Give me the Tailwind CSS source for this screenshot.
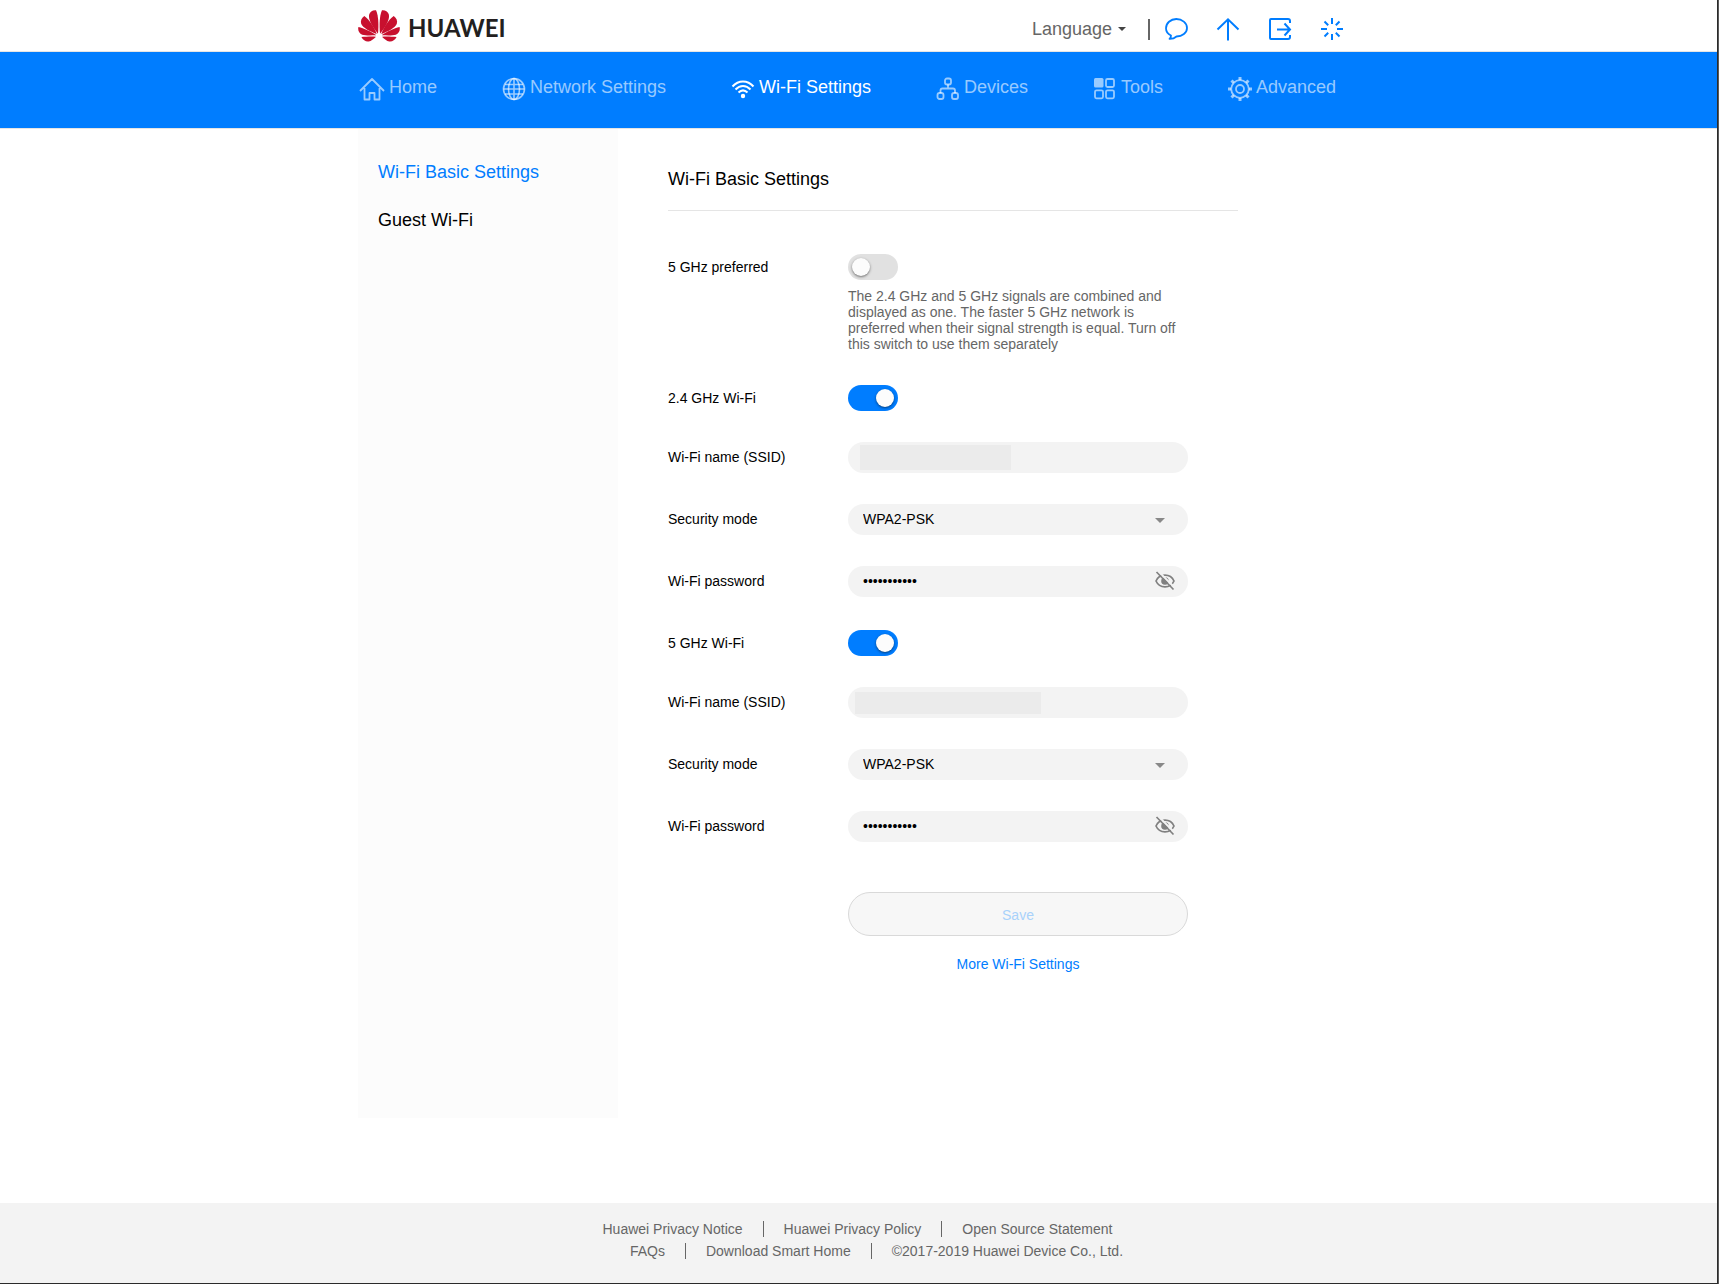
<!DOCTYPE html>
<html lang="en">
  <head>
    <meta charset="UTF-8" />
    <meta name="viewport" content="width=device-width, initial-scale=1.0" />
    <title>Wi-Fi Basic Settings</title>
    <script src="https://cdn.jsdelivr.net/npm/@tailwindcss/browser@4"></script>
  </head>
  <body class="bg-white text-black font-['Liberation_Sans',Arial,sans-serif] text-sm border-r border-[#5a5a5a]">
    <div class="min-h-screen flex flex-col border-r border-b border-[#2b2b2b]">
      <!-- Top bar -->
      <header class="border-b border-[#e5e5e5]">
        <div class="max-w-[1001px] h-[51px] mx-auto flex items-center justify-between">
          <a href="#" class="flex items-center" aria-label="Huawei">
            <svg class="w-[42px] h-8" viewBox="0 0 42 32" fill="#c8102e">
              <g id="petals">
                <path d="M20 23.300C20.700 16.500 20.700 6 18 .3C14.600 0 11.700 1.800 11.100 4.800C10.200 9.800 14.200 16.500 19.700 23.400z" />
                <path d="M18.700 23.900C16.300 17 11.200 9.600 6.300 6C3.400 8 2.300 11 3.200 13.800C4.700 18 11.800 21.300 18.500 24.100z" />
                <path d="M18.100 25.100C13.200 21.900 5.800 18.200 .4 17.100C-.4 20.400 1.100 23.500 4.200 24.700C7.600 25.800 13.600 25.400 18 25.300z" />
                <path d="M17.700 26.700C13 26.500 7.500 26.700 3.400 27.100C5.100 30.300 8 32 10.700 31.500C13.300 31 15.600 28.900 17.800 26.900z" />
              </g>
              <use href="#petals" transform="matrix(-1 0 0 1 42 0)" />
            </svg>
            <span class="ml-2 pt-1 font-['Lato',sans-serif] text-2xl leading-6 font-bold text-[#231f20]">HUAWEI</span>
          </a>
          <div class="flex items-center pt-[7px]">
            <button class="flex items-center gap-1.5 text-lg text-[#666]">
              Language
              <svg class="w-2 h-1" viewBox="0 0 8 4" fill="#444"><path d="M0 0h8L4 4z" /></svg>
            </button>
            <span class="w-0.5 h-[21px] ml-[22px] bg-[#666]"></span>
            <div class="flex gap-7 ml-3.5 mr-[15px] text-[#007dff]">
              <button aria-label="Feedback">
                <svg class="size-6" viewBox="0 0 24 24" fill="none" stroke="currentColor" stroke-width="1.800">
                  <path d="M7 18.500C3.800 17 2 14.300 2 11.300C2 6.300 6.500 2 12.300 2S23 6 23 10.900S18.300 19.500 12.500 19.500C10.500 21.300 8.300 22 5.500 21.900C6.700 21 7 19.800 7 18.500z" stroke-linejoin="round" />
                </svg>
              </button>
              <button aria-label="Update">
                <svg class="size-6" viewBox="0 0 24 24" fill="none" stroke="currentColor" stroke-width="2">
                  <path d="M12 23.500V2.500M1.500 12.500L12 2.300L22.500 12.500" />
                </svg>
              </button>
              <button aria-label="Log out">
                <svg class="size-6" viewBox="0 0 24 24" fill="none" stroke="currentColor" stroke-width="2">
                  <path d="M22 6V4Q22 2 20 2H3Q2 2 2 3V21Q2 22 3 22H20Q22 22 22 20V18M9 12.500H22M16.500 6.500L22 12.500L16.500 18.500" />
                </svg>
              </button>
              <button aria-label="Restart">
                <svg class="size-6" viewBox="0 0 24 24" fill="none" stroke="currentColor" stroke-width="2">
                  <path d="M12 1v6M12 17v6M1 12h6M17 12h6M4.500 4.500l3.700 3.700M15.800 15.800l3.700 3.700M4.500 19.500l3.700-3.700M15.800 8.200l3.700-3.700" />
                </svg>
              </button>
            </div>
          </div>
        </div>
      </header>

      <!-- Main navigation -->
      <nav class="bg-[#007dff] border-b border-[#e5e5e5]">
        <div class="max-w-[1001px] h-[76px] pb-1.5 mx-auto flex items-center justify-between pl-px pr-[23px] text-lg text-white/60">
          <a href="#" class="flex items-center gap-1">
            <svg class="w-[26px] h-6 mt-1" viewBox="0 0 26 24" fill="none" stroke="currentColor" stroke-width="1.800">
              <path d="M1 14L13 2L25 14M5.500 11V22.500H10.500V16H15.500V22.500H20.500V11" stroke-linejoin="round" />
            </svg>
            Home
          </a>
          <a href="#" class="flex items-center gap-1">
            <svg class="size-6 mt-1" viewBox="0 0 24 24" fill="none" stroke="currentColor" stroke-width="1.600">
              <circle cx="12" cy="12" r="10.500" />
              <ellipse cx="12" cy="12" rx="5.500" ry="10.500" />
              <path d="M12 1.500v21M3 7.500h18M1.500 12h21M3 17h18" />
            </svg>
            Network Settings
          </a>
          <a href="#" class="flex items-center gap-1 text-white">
            <svg class="size-6 mt-1" viewBox="0 0 24 24" fill="none" stroke="currentColor" stroke-width="2">
              <path d="M1.500 9.500C7.500 2.800 16.500 2.800 22.500 9.500M4.500 12.500C9 7.800 15 7.800 19.500 12.500M7.500 15.500C10.300 12.800 13.700 12.800 16.500 15.500" />
              <circle cx="12" cy="19" r="2.200" fill="currentColor" stroke="none" />
            </svg>
            Wi-Fi Settings
          </a>
          <a href="#" class="flex items-center gap-1">
            <svg class="size-6 mt-1" viewBox="0 0 24 24" fill="none" stroke="currentColor" stroke-width="1.800">
              <rect x="9" y="1.500" width="6" height="6" rx="2" />
              <rect x="1.500" y="16" width="6" height="6" rx="2" />
              <rect x="16" y="16" width="6" height="6" rx="2" />
              <path d="M12 7.500v4M4.500 16V13.500Q4.500 11.500 6.500 11.500H17Q19 11.500 19 13.500V16" />
            </svg>
            Devices
          </a>
          <a href="#" class="flex items-center gap-1">
            <svg class="size-6 mt-1" viewBox="0 0 24 24" fill="none" stroke="currentColor" stroke-width="1.800">
              <rect x="1" y="1" width="9.500" height="9.500" rx="1.500" fill="currentColor" stroke="none" />
              <rect x="13" y="2" width="8" height="8" rx="1.500" />
              <rect x="2" y="13.300" width="8" height="8" rx="1.500" />
              <rect x="13" y="13.300" width="8" height="8" rx="1.500" />
            </svg>
            Tools
          </a>
          <a href="#" class="flex items-center gap-1">
            <svg class="size-6 mt-1" viewBox="0 0 24 24" fill="none" stroke="currentColor" stroke-width="1.800">
              <circle cx="12" cy="12" r="8.800" />
              <circle cx="12" cy="12" r="4" />
              <path d="M12 0v3M12 21v3M0 12h3M21 12h3M3.500 3.500l2.200 2.200M18.300 18.300l2.200 2.200M3.500 20.500l2.200-2.200M18.300 5.700l2.200-2.200" stroke-width="3" />
            </svg>
            Advanced
          </a>
        </div>
      </nav>

      <div class="w-full max-w-[1001px] mx-auto flex grow mb-[85px]">
        <!-- Side menu -->
        <aside class="w-[260px] shrink-0 bg-[#fcfcfc] px-5 pt-[19px] text-lg">
          <a href="#" class="block h-12 leading-12 text-[#007dff]">Wi-Fi Basic Settings</a>
          <a href="#" class="block h-12 leading-12">Guest Wi-Fi</a>
        </aside>

        <main class="w-[570px] ml-[50px]">
          <h1 class="h-[82px] pt-9 text-lg border-b border-[#e5e5e5]">Wi-Fi Basic Settings</h1>
          <form class="pt-[43px]">
            <div class="flex h-[131px]">
              <label for="preferred" class="w-[180px] leading-[26px]">5 GHz preferred</label>
              <div class="w-[340px]">
                <input type="checkbox" id="preferred" class="block appearance-none w-[50px] h-[26px] rounded-full bg-[#e1e1e1] checked:bg-[#007dff] before:block before:size-[18px] before:m-1 before:rounded-full before:bg-[#fcfcfc] before:shadow before:shadow-black/40 checked:before:ml-7" />
                <p class="mt-2 leading-4 text-[#666]">
                  The 2.4 GHz and 5 GHz signals are combined and displayed as one. The faster 5 GHz network is preferred when their signal strength is equal. Turn off this switch to use them separately
                </p>
              </div>
            </div>

            <!-- 2.4 GHz -->
            <div class="flex h-[57px]">
              <label for="wifi24" class="w-[180px] leading-[26px]">2.4 GHz Wi-Fi</label>
              <input type="checkbox" id="wifi24" checked class="block appearance-none w-[50px] h-[26px] rounded-full bg-[#e1e1e1] checked:bg-[#007dff] before:block before:size-[18px] before:m-1 before:rounded-full before:bg-[#fcfcfc] before:shadow before:shadow-black/40 checked:before:ml-7" />
            </div>
            <div class="flex h-[62px]">
              <label for="ssid24" class="w-[180px] leading-[30px]">Wi-Fi name (SSID)</label>
              <div class="relative w-[340px] h-[31px]">
                <input type="text" id="ssid24" class="w-full h-full px-[15px] pb-0.5 rounded-full bg-[#f3f3f3]" />
                <span class="absolute left-3 top-[3px] w-[151px] h-[25px] bg-[#ebebeb]"></span>
              </div>
            </div>
            <div class="flex h-[62px]">
              <label for="mode24" class="w-[180px] leading-[30px]">Security mode</label>
              <div class="relative w-[340px] h-[31px]">
                <select id="mode24" class="appearance-none w-full h-full px-[15px] pb-0.5 rounded-full bg-[#f3f3f3]">
                  <option>WPA2-PSK</option>
                </select>
                <svg class="absolute right-[23px] top-3.5 w-2.5 h-[5px]" viewBox="0 0 10 5" fill="#888"><path d="M0 0h10L5 5z" /></svg>
              </div>
            </div>
            <div class="flex h-16">
              <label for="pass24" class="w-[180px] leading-[30px]">Wi-Fi password</label>
              <div class="relative w-[340px] h-[31px]">
                <input type="password" id="pass24" value="wifipasswor" class="w-full h-full px-[15px] pb-0.5 rounded-full bg-[#f3f3f3]" />
                <button type="button" aria-label="Show password" class="absolute right-[13px] top-[5px]">
                  <svg class="size-5" viewBox="0 0 20 20" fill="none" stroke="#808080" stroke-width="1.700">
                    <path d="M1 10C4.500 2.200 15.500 2.200 19 10C15.500 17.800 4.500 17.800 1 10z" />
                    <circle cx="10" cy="10" r="3.800" fill="#808080" stroke="none" />
                    <path d="M3 0L20 17" stroke="#f3f3f3" stroke-width="2" />
                    <path d="M1.500 1L18.500 18.500" />
                  </svg>
                </button>
              </div>
            </div>

            <!-- 5 GHz -->
            <div class="flex h-[57px]">
              <label for="wifi5" class="w-[180px] leading-[26px]">5 GHz Wi-Fi</label>
              <input type="checkbox" id="wifi5" checked class="block appearance-none w-[50px] h-[26px] rounded-full bg-[#e1e1e1] checked:bg-[#007dff] before:block before:size-[18px] before:m-1 before:rounded-full before:bg-[#fcfcfc] before:shadow before:shadow-black/40 checked:before:ml-7" />
            </div>
            <div class="flex h-[62px]">
              <label for="ssid5" class="w-[180px] leading-[30px]">Wi-Fi name (SSID)</label>
              <div class="relative w-[340px] h-[31px]">
                <input type="text" id="ssid5" class="w-full h-full px-[15px] pb-0.5 rounded-full bg-[#f3f3f3]" />
                <span class="absolute left-[7px] top-[5px] w-[186px] h-[22px] bg-[#ebebeb]"></span>
              </div>
            </div>
            <div class="flex h-[62px]">
              <label for="mode5" class="w-[180px] leading-[30px]">Security mode</label>
              <div class="relative w-[340px] h-[31px]">
                <select id="mode5" class="appearance-none w-full h-full px-[15px] pb-0.5 rounded-full bg-[#f3f3f3]">
                  <option>WPA2-PSK</option>
                </select>
                <svg class="absolute right-[23px] top-3.5 w-2.5 h-[5px]" viewBox="0 0 10 5" fill="#888"><path d="M0 0h10L5 5z" /></svg>
              </div>
            </div>
            <div class="flex h-[81px]">
              <label for="pass5" class="w-[180px] leading-[30px]">Wi-Fi password</label>
              <div class="relative w-[340px] h-[31px]">
                <input type="password" id="pass5" value="wifipasswor" class="w-full h-full px-[15px] pb-0.5 rounded-full bg-[#f3f3f3]" />
                <button type="button" aria-label="Show password" class="absolute right-[13px] top-[5px]">
                  <svg class="size-5" viewBox="0 0 20 20" fill="none" stroke="#808080" stroke-width="1.700">
                    <path d="M1 10C4.500 2.200 15.500 2.200 19 10C15.500 17.800 4.500 17.800 1 10z" />
                    <circle cx="10" cy="10" r="3.800" fill="#808080" stroke="none" />
                    <path d="M3 0L20 17" stroke="#f3f3f3" stroke-width="2" />
                    <path d="M1.500 1L18.500 18.500" />
                  </svg>
                </button>
              </div>
            </div>

            <div class="ml-[180px] w-[340px] flex flex-col items-center gap-[18px]">
              <button type="submit" disabled class="w-full h-11 pt-0.5 rounded-full border border-[#d9d9d9] bg-[#f7f7f7] text-[#a9d2fb]">Save</button>
              <a href="#" class="text-[#007dff]">More Wi-Fi Settings</a>
            </div>
          </form>
        </main>
      </div>

      <footer class="h-20 pt-[15px] bg-[#f3f3f3] text-[#666]">
        <div class="flex items-center justify-center gap-5 h-[22px] pr-0.5">
          <a href="#">Huawei Privacy Notice</a>
          <span class="w-px h-4 bg-[#666]"></span>
          <a href="#">Huawei Privacy Policy</a>
          <span class="w-px h-4 bg-[#666]"></span>
          <a href="#">Open Source Statement</a>
        </div>
        <div class="flex items-center justify-center gap-5 h-[22px] pl-9">
          <a href="#">FAQs</a>
          <span class="w-px h-4 bg-[#666]"></span>
          <a href="#">Download Smart Home</a>
          <span class="w-px h-4 bg-[#666]"></span>
          <span>©2017-2019 Huawei Device Co., Ltd.</span>
        </div>
      </footer>
    </div>
  </body>
</html>
